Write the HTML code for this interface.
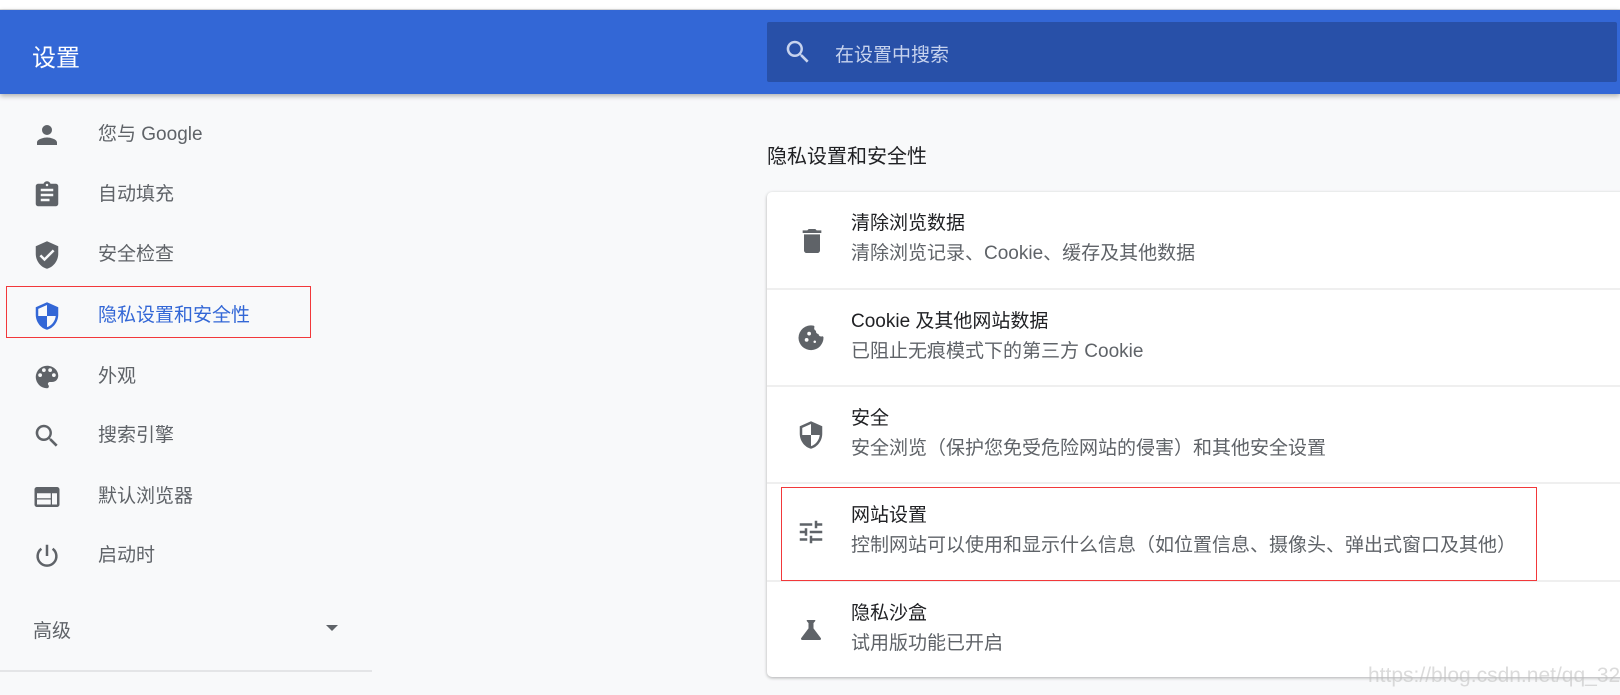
<!DOCTYPE html>
<html><head><meta charset="utf-8"><style>
*{margin:0;padding:0;box-sizing:border-box}
body{width:1620px;height:695px;background:#f8f9fa;font-family:"Liberation Sans","Noto Sans CJK SC",sans-serif;position:relative;overflow:hidden}
.top{position:absolute;left:0;top:0;width:1620px;height:10px;background:#fff;border-bottom:1px solid #ddd}
.hdr{position:absolute;left:0;top:10px;width:1620px;height:84px;background:#3367d6;box-shadow:0 2px 5px rgba(0,0,0,.3)}
.hdr .t{position:absolute;left:32px;top:28px;color:#fff;font-size:24px}
.search{position:absolute;left:767px;top:12px;width:850px;height:60px;background:#2850a8;border-radius:2px}
.search svg{position:absolute;left:16px;top:15px}
.search span{position:absolute;left:68px;top:18px;color:#c7d3ee;font-size:19px}
.nav{position:absolute;left:0;height:40px;width:372px}
.nav svg{position:absolute;left:32px;top:5px}
.nav span{position:absolute;left:98px;top:8px;font-size:19px;color:#5f6368;line-height:24px}
.rb{position:absolute;border:1px solid #f2383a}
.line{position:absolute;left:0;top:670px;width:372px;height:2px;background:#e4e5e7}
.sec{position:absolute;left:767px;top:140px;font-size:20px;color:#202124}
.card{position:absolute;left:767px;top:192px;width:860px;height:485px;background:#fff;border-radius:5px;box-shadow:0 1px 3px rgba(0,0,0,.3)}
.row{position:absolute;left:0;width:860px;height:97px;border-top:2px solid #efefef}
.row:first-child{border-top:none}
.row svg{position:absolute;left:29px;top:33px}
.row .a{position:absolute;left:84px;top:20px;font-size:19px;color:#202124;line-height:24px;white-space:nowrap}
.row .b{position:absolute;left:84px;top:50px;font-size:19px;color:#5f6368;line-height:24px;white-space:nowrap}
.wm{position:absolute;left:1368px;top:664px;font-size:21px;color:rgba(190,190,190,.55)}
</style></head><body>
<div class="top"></div>
<div class="hdr"><div class="t">设置</div>
<div class="search"><svg width="30" height="30" viewBox="0 0 24 24"><path fill="#c7d3ee" d="M15.5 14h-.8l-.3-.3A6.5 6.5 0 1 0 9.5 16a6.5 6.5 0 0 0 4.2-1.6l.3.3v.8l5 5 1.5-1.5-5-5zm-6 0a4.5 4.5 0 1 1 0-9 4.5 4.5 0 0 1 0 9z"/></svg><span>在设置中搜索</span></div></div>

<div class="nav" style="top:115px"><svg width="30" height="30" viewBox="0 0 24 24"><path fill="#5f6368" d="M12 12a4 4 0 1 0 0-8 4 4 0 0 0 0 8zm0 2c-2.7 0-8 1.3-8 4v2h16v-2c0-2.7-5.3-4-8-4z"/></svg><span>您与 Google</span></div>
<div class="nav" style="top:175px"><svg width="30" height="30" viewBox="0 0 24 24"><path fill="#5f6368" d="M19 3h-4.2C14.4 1.8 13.3 1 12 1s-2.4.8-2.8 2H5c-1.1 0-2 .9-2 2v14c0 1.1.9 2 2 2h14c1.1 0 2-.9 2-2V5c0-1.1-.9-2-2-2zm-7 0a1 1 0 1 1 0 2 1 1 0 0 1 0-2zm2 14H7v-2h7v2zm3-4H7v-2h10v2zm0-4H7V7h10v2z"/></svg><span>自动填充</span></div>
<div class="nav" style="top:235px"><svg width="30" height="30" viewBox="0 0 24 24"><path fill="#5f6368" d="M12 1L3 5v6c0 5.5 3.8 10.7 9 12 5.2-1.3 9-6.5 9-12V5l-9-4zm-2 16l-4-4 1.4-1.4L10 14.2l6.6-6.6L18 9l-8 8z"/></svg><span>安全检查</span></div>
<div class="nav" style="top:296px"><svg width="30" height="30" viewBox="0 0 24 24"><path fill="#3367d6" d="M12 1L3 5v6c0 5.5 3.8 10.7 9 12 5.2-1.3 9-6.5 9-12V5l-9-4zm0 11h7c-.5 4.1-3.3 7.8-7 8.9V12H5V6.3l7-3.1V12z"/></svg><span style="color:#3367d6">隐私设置和安全性</span></div>
<div class="rb" style="left:6px;top:286px;width:305px;height:52px"></div>
<div class="nav" style="top:357px"><svg width="30" height="30" viewBox="0 0 24 24"><path fill="#5f6368" d="M12 3a9 9 0 0 0 0 18c.8 0 1.5-.7 1.5-1.5 0-.4-.1-.7-.4-1-.2-.3-.4-.6-.4-1 0-.8.7-1.5 1.5-1.5H16c2.8 0 5-2.2 5-5 0-4.4-4-8-9-8zm-5.5 9a1.5 1.5 0 1 1 0-3 1.5 1.5 0 0 1 0 3zm3-4a1.5 1.5 0 1 1 0-3 1.5 1.5 0 0 1 0 3zm5 0a1.5 1.5 0 1 1 0-3 1.5 1.5 0 0 1 0 3zm3 4a1.5 1.5 0 1 1 0-3 1.5 1.5 0 0 1 0 3z"/></svg><span>外观</span></div>
<div class="nav" style="top:416px"><svg width="30" height="30" viewBox="0 0 24 24"><path fill="#5f6368" d="M15.5 14h-.8l-.3-.3A6.5 6.5 0 1 0 9.5 16a6.5 6.5 0 0 0 4.2-1.6l.3.3v.8l5 5 1.5-1.5-5-5zm-6 0a4.5 4.5 0 1 1 0-9 4.5 4.5 0 0 1 0 9z"/></svg><span>搜索引擎</span></div>
<div class="nav" style="top:477px"><svg width="30" height="30" viewBox="0 0 24 24"><path fill="#5f6368" d="M20 4H4c-1.1 0-2 .9-2 2v12c0 1.1.9 2 2 2h16c1.1 0 2-.9 2-2V6c0-1.1-.9-2-2-2zm-5 14H4v-4h11v4zm0-5H4V9h11v4zm5 5h-4V9h4v9z"/></svg><span>默认浏览器</span></div>
<div class="nav" style="top:536px"><svg width="30" height="30" viewBox="0 0 24 24"><path fill="none" stroke="#5f6368" stroke-width="2" d="M12 3v9M7.5 6.2A7.5 7.5 0 1 0 16.5 6.2"/></svg><span>启动时</span></div>
<div style="position:absolute;left:33px;top:616px;font-size:19px;color:#5f6368">高级</div>
<div style="position:absolute;left:326px;top:625px;width:0;height:0;border-left:6px solid transparent;border-right:6px solid transparent;border-top:6px solid #5f6368"></div>
<div class="line"></div>

<div class="sec">隐私设置和安全性</div>
<div class="card">
<div class="row" style="top:0"><svg width="32" height="32" viewBox="0 0 24 24"><path fill="#5f6368" d="M6 19c0 1.1.9 2 2 2h8c1.1 0 2-.9 2-2V7H6v12zM19 4h-3.5l-1-1h-5l-1 1H5v2h14V4z"/></svg><div class="a">清除浏览数据</div><div class="b">清除浏览记录、Cookie、缓存及其他数据</div></div>
<div class="row" style="top:96px"><svg width="30" height="30" viewBox="0 0 24 24"><path fill="#5f6368" d="M21.9 11.4c-.1-.6-.7-.9-1.2-.7-1.4.4-2.6-.6-2.7-1.9-.6 0-1.2-.3-1.600-.8-.4-.5-.5-1.1-.3-1.7-1.2-.4-1.9-1.7-1.4-2.9.2-.6-.2-1.2-.8-1.3A10 10 0 0 0 2 12a10 10 0 0 0 20-.6zM8.5 15a1.5 1.5 0 1 1 0-3 1.5 1.5 0 0 1 0 3zm2-5a1.5 1.5 0 1 1 0-3 1.5 1.5 0 0 1 0 3zm4.5 6a1 1 0 1 1 0-2 1 1 0 0 1 0 2z"/></svg><div class="a">Cookie 及其他网站数据</div><div class="b">已阻止无痕模式下的第三方 Cookie</div></div>
<div class="row" style="top:193px"><svg width="30" height="30" viewBox="0 0 24 24"><path fill="#5f6368" d="M12 1L3 5v6c0 5.5 3.8 10.7 9 12 5.2-1.3 9-6.5 9-12V5l-9-4zm0 11h7c-.5 4.1-3.3 7.8-7 8.9V12H5V6.3l7-3.1V12z"/></svg><div class="a">安全</div><div class="b">安全浏览（保护您免受危险网站的侵害）和其他安全设置</div></div>
<div class="row" style="top:290px"><svg width="30" height="30" viewBox="0 0 24 24"><path fill="#5f6368" d="M3 17v2h6v-2H3zM3 5v2h10V5H3zm10 16v-2h8v-2h-8v-2h-2v6h2zM7 9v2H3v2h4v2h2V9H7zm14 4v-2H11v2h10zm-6-4h2V7h4V5h-4V3h-2v6z"/></svg><div class="a">网站设置</div><div class="b">控制网站可以使用和显示什么信息（如位置信息、摄像头、弹出式窗口及其他）</div></div>
<div class="row" style="top:388px"><svg width="30" height="30" viewBox="0 0 24 24"><path fill="#5f6368" d="M19.8 18.4L14 10.7V6.5l1.4-1.7c.3-.3 0-.8-.4-.8H9c-.4 0-.6.5-.4.8L10 6.5v4.2l-5.8 7.7c-.5.7 0 1.6.8 1.6h14c.8 0 1.3-1 .8-1.6z"/></svg><div class="a">隐私沙盒</div><div class="b">试用版功能已开启</div></div>
</div>
<div class="rb" style="left:781px;top:487px;width:756px;height:94px"></div>
<div class="wm">https://blog.csdn.net/qq_32394351</div>
</body></html>
